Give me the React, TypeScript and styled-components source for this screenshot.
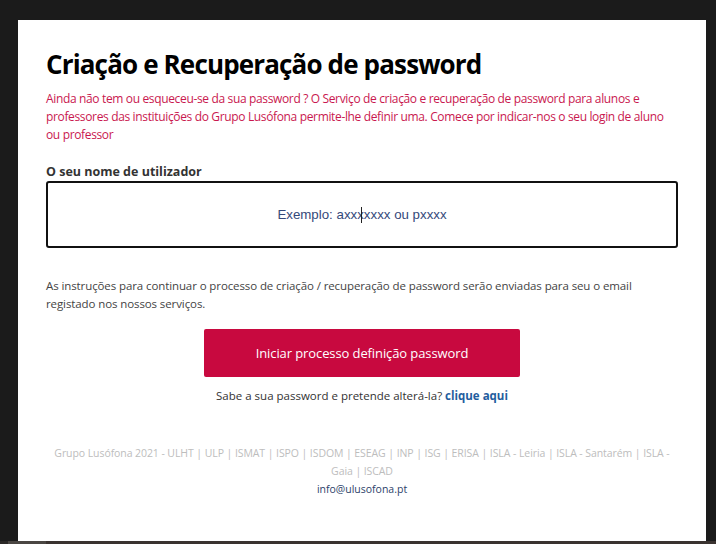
import React from 'react'
import styled, { createGlobalStyle } from 'styled-components'

const GlobalStyle = createGlobalStyle`
  html, body {
    margin: 0;
    padding: 0;
    background: #1b1b1b;
  }
  body {
    font-family: 'Open Sans', 'Noto Sans', sans-serif;
  }
`

const Screen = styled.div`
  width: 716px;
  height: 544px;
  overflow: hidden;
  display: flex;
  flex-direction: column;
  background: #1b1b1b;
`

const Panel = styled.main`
  margin: 20px 10px 0 18px;
  height: 521px;
  box-sizing: border-box;
  background: #fff;
  padding: 27px 28px 0 28px;
  display: flex;
  flex-direction: column;
`

const Title = styled.h1`
  margin: 0;
  font-size: 26px;
  line-height: 34px;
  font-weight: 700;
  color: #000;
  letter-spacing: -0.85px;
`

const Intro = styled.p`
  margin: 9px 0 0;
  font-size: 12px;
  line-height: 18px;
  color: #c9184f;
  letter-spacing: -0.35px;
`

const Label = styled.label`
  display: block;
  margin-top: 19px;
  font-size: 12.5px;
  line-height: 18px;
  font-weight: 700;
  color: #333;
`

const InputBox = styled.div`
  position: relative;
  height: 67px;
  box-sizing: border-box;
  border: 2px solid #111;
  border-radius: 3px;
  display: flex;
  align-items: center;
  justify-content: center;
`

const Placeholder = styled.span`
  position: relative;
  font-family: 'Liberation Sans', Arial, sans-serif;
  font-size: 13.3px;
  color: #34497a;
`

const Caret = styled.span`
  position: absolute;
  left: 84px;
  top: 0;
  width: 1px;
  height: 16px;
  background: #222;
`

const Note = styled.p`
  margin: 29px 0 0;
  font-size: 11.5px;
  line-height: 18px;
  color: #444;
  letter-spacing: -0.1px;
`

const Actions = styled.div`
  margin-top: 16px;
  display: flex;
  flex-direction: column;
  align-items: center;
`

const PrimaryButton = styled.button`
  width: 316px;
  height: 48px;
  border: none;
  border-radius: 2px;
  background: #c8093f;
  color: #fff;
  font-family: inherit;
  font-size: 13px;
  letter-spacing: -0.1px;
  cursor: pointer;
`

const Hint = styled.p`
  margin: 10px 0 0;
  font-size: 11.5px;
  line-height: 18px;
  color: #333;
`

const HintLink = styled.a`
  color: #1f5d9e;
  font-weight: 700;
  text-decoration: none;
`

const Footer = styled.footer`
  margin-top: 39px;
  text-align: center;
  font-size: 10.5px;
  line-height: 18px;
  color: #bdbdbd;
  letter-spacing: -0.08px;
`

const Mail = styled.div`
  color: #2d3f6a;
  letter-spacing: 0;
`

const Taskbar = styled.div`
  flex: 1;
  background: linear-gradient(90deg, #2a2826 0 8px, #4a4642 8px 46px, #3a3330 46px);
`

export default function App() {
  return (
    <>
      <GlobalStyle />
      <Screen>
        <Panel>
          <Title>Criação e Recuperação de password</Title>
          <Intro>
            Ainda não tem ou esqueceu-se da sua password ? O Serviço de criação e recuperação de
            password para alunos e professores das instituições do Grupo Lusófona permite-lhe definir
            uma. Comece por indicar-nos o seu login de aluno ou professor
          </Intro>
          <Label>O seu nome de utilizador</Label>
          <InputBox>
            <Placeholder>
              Exemplo: axxxxxxx ou pxxxx
              <Caret />
            </Placeholder>
          </InputBox>
          <Note>
            As instruções para continuar o processo de criação / recuperação de password serão
            enviadas para seu o email registado nos nossos serviços.
          </Note>
          <Actions>
            <PrimaryButton>Iniciar processo definição password</PrimaryButton>
            <Hint>
              Sabe a sua password e pretende alterá-la? <HintLink href="#">clique aqui</HintLink>
            </Hint>
          </Actions>
          <Footer>
            Grupo Lusófona 2021 - ULHT | ULP | ISMAT | ISPO | ISDOM | ESEAG | INP | ISG | ERISA | ISLA
            - Leiria | ISLA - Santarém | ISLA - Gaia | ISCAD
            <Mail>info@ulusofona.pt</Mail>
          </Footer>
        </Panel>
        <Taskbar />
      </Screen>
    </>
  )
}
